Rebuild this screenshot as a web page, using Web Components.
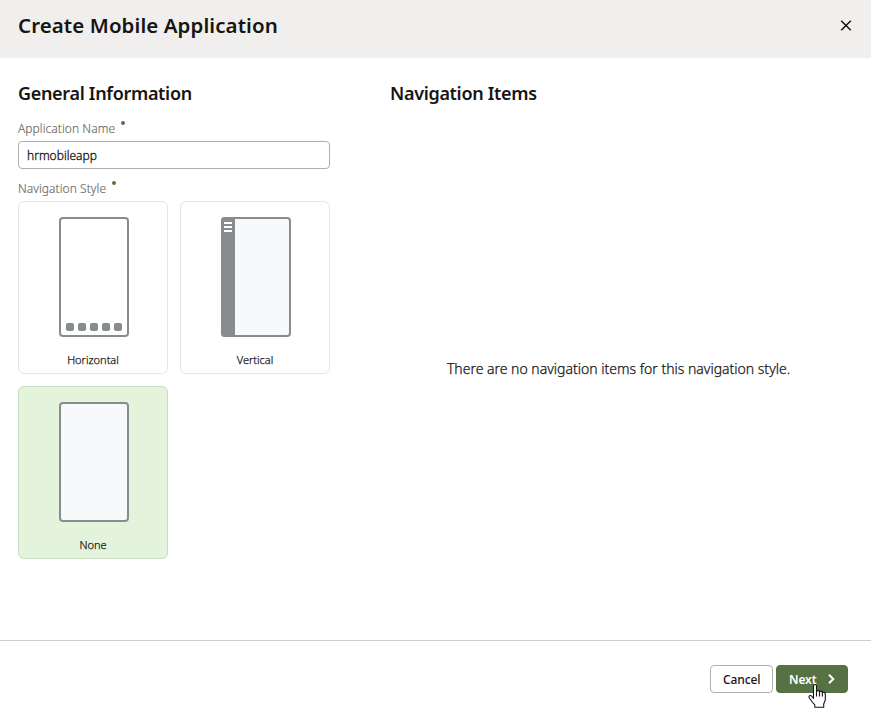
<!DOCTYPE html>
<html lang="en">
<head>
<meta charset="utf-8">
<title>Create Mobile Application</title>
<style>
html,body{margin:0;height:100%}
body{font-family:"Noto Sans","Open Sans",sans-serif;color:#161513;background:#fff;overflow:hidden}
</style>
</head>
<body>
<app-wizard></app-wizard>
<script>
function define(name, html) {
  customElements.define(name, class extends HTMLElement {
    constructor() {
      super();
      this.attachShadow({ mode: 'open' }).innerHTML = html;
    }
  });
}

define('dialog-header', `
<style>
:host{display:flex;justify-content:space-between;height:58px;box-sizing:border-box;background:#f0efed;padding:12px 19px 0 18px}
h1{margin:0;font-size:20.5px;line-height:26px;font-weight:600;letter-spacing:.08px;white-space:nowrap}
svg{width:12px;height:12px;margin-top:7px}
</style>
<h1><slot></slot></h1>
<svg viewBox="0 0 12 12"><path d="M1.2 1.7 10.8 11.3M10.8 1.7 1.2 11.3" stroke="#161513" stroke-width="1.5" fill="none"/></svg>`);

define('section-title', `
<style>
:host{display:block;font-size:18px;line-height:24px;font-weight:600;letter-spacing:-.32px;white-space:nowrap}
</style><slot></slot>`);

define('field-label', `
<style>
:host{display:flex;gap:6px;font-size:12px;line-height:16px;font-weight:300;color:#6b6964;-webkit-text-stroke:.15px;white-space:nowrap;letter-spacing:.06px}
i{width:4px;height:4px;border-radius:50%;background:#567143}
</style><span><slot></slot></span><i></i>`);

define('text-field', `
<style>
:host{display:block;box-sizing:border-box;height:28px;border:1px solid #b0afae;border-radius:4px;padding:0 8px;font-size:12px;line-height:27px;font-weight:300;-webkit-text-stroke:.3px}
</style><slot></slot>`);

define('style-card', `
<style>
:host{display:flex;flex-direction:column;align-items:center;box-sizing:border-box;width:150px;height:173px;border:1px solid #e6e6e5;border-radius:6px;padding-top:15px;background:#fff}
:host([selected]){background:#e4f3dc;border-color:#cbddc1}
::slotted(svg){display:block;width:70px;height:120px;margin-left:1px}
span{font-size:11px;line-height:16px;margin-top:15px;font-weight:300;-webkit-text-stroke:.25px}
</style><slot name="art"></slot><span><slot></slot></span>`);

define('wizard-button', `
<style>
:host{display:flex;align-items:center;box-sizing:border-box;height:28px;border:1px solid #b0afae;border-radius:4px;padding:0 12px;font-size:12px;line-height:26px;font-weight:500;white-space:nowrap;letter-spacing:-.1px}
:host([primary]){background:#567143;border-color:#567143;color:#fff;font-weight:600}
span{padding-top:1px}
::slotted(svg){margin-left:auto}
</style><span><slot></slot></span><slot name="icon"></slot>`);

define('hand-cursor', `
<style>:host{position:absolute;left:808px;top:683px;width:18px;height:26px}svg{display:block}</style>
<svg width="18" height="26" viewBox="0 0 18 26"><path d="M5.5 15.5V3.2C5.5 .9 8.5 .9 8.5 3.2V8.8C8.6 7.1 11.4 7.2 11.5 9C11.9 7.6 14.2 7.9 14.4 9.8C15 8.8 17.3 9.2 17.3 11V16.5C17.3 18 16.2 19.3 15.7 20.8V24.3H6.8V21.8C4.5 19.5 3 17.3 1.2 14.7C.3 13 2.3 11.8 3.6 13Z" fill="#fff" stroke="#15141d" stroke-width="1.1" stroke-linejoin="round"/><path d="M8.5 8.5V13.5M11.5 9V13.5M14.4 9.8V13.5" stroke="#15141d" stroke-width="1.1"/></svg>`);

define('app-wizard', `
<style>
:host{display:grid;grid-template-rows:58px 582px 70px;height:710px;width:871px}
main{display:grid;grid-template-columns:312px 457px;column-gap:60px;padding:23px 0 0 18px}
.right{display:flex;flex-direction:column}
.name{margin-top:16px}
text-field{margin-top:4px}
.style{margin-top:12px}
.cards{display:grid;grid-template-columns:150px 150px;gap:12px;margin-top:4px}
.empty{margin:252px 0 0;font-size:14px;line-height:24px;font-weight:300;-webkit-text-stroke:.25px;text-align:center;white-space:nowrap}
footer{display:flex;justify-content:flex-end;gap:3px;border-top:1px solid #d0cfce;padding:24px 23px 0 0}
</style>
<dialog-header>Create Mobile Application</dialog-header>
<main>
  <section>
    <section-title>General Information</section-title>
    <field-label class="name">Application Name</field-label>
    <text-field>hrmobileapp</text-field>
    <field-label class="style">Navigation Style</field-label>
    <div class="cards">
      <style-card>
        <svg slot="art" viewBox="0 0 70 120"><rect x="1" y="1" width="68" height="118" rx="3" fill="#fff" stroke="#878d8f" stroke-width="2"/><g fill="#878d8f"><rect x="7" y="106" width="8" height="8" rx="2"/><rect x="19" y="106" width="8" height="8" rx="2"/><rect x="31" y="106" width="8" height="8" rx="2"/><rect x="43" y="106" width="8" height="8" rx="2"/><rect x="55" y="106" width="8" height="8" rx="2"/></g></svg>
        Horizontal</style-card>
      <style-card>
        <svg slot="art" viewBox="0 0 70 120"><rect x="1" y="1" width="68" height="118" rx="3" fill="#f8f9fb" stroke="#878d8f" stroke-width="2"/><path d="M4 0H14V120H4Q0 120 0 116V4Q0 0 4 0Z" fill="#878d8f"/><path d="M3 6H11M3 10H11M3 14H11" stroke="#fff" stroke-width="2"/></svg>
        Vertical</style-card>
      <style-card selected>
        <svg slot="art" viewBox="0 0 70 120"><rect x="1" y="1" width="68" height="118" rx="3" fill="#f8f9fb" stroke="#878d8f" stroke-width="2"/></svg>
        None</style-card>
    </div>
  </section>
  <section class="right">
    <section-title>Navigation Items</section-title>
    <p class="empty">There are no navigation items for this navigation style.</p>
  </section>
</main>
<footer>
  <wizard-button style="width:63px">Cancel</wizard-button>
  <wizard-button primary style="width:72px">Next<svg slot="icon" width="8" height="10" viewBox="0 0 8 10"><path d="M2 .8 6.3 5 2 9.2" fill="none" stroke="#fff" stroke-width="2"/></svg></wizard-button>
</footer>
<hand-cursor></hand-cursor>`);
</script>
</body>
</html>
